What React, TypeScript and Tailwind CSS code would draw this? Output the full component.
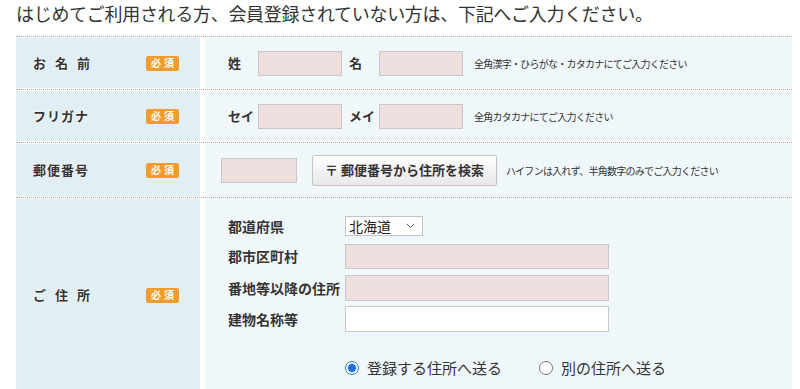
import type { ReactNode } from 'react';

function Badge() {
  return (
    <span className="inline-flex h-[15px] w-[33px] items-center justify-center rounded-[2px] bg-[#f39b2d] pl-[3px] text-[10px] leading-none font-bold tracking-[3px] text-white">
      必須
    </span>
  );
}

function Row({ label, height, children }: { label: ReactNode; height: string; children: ReactNode }) {
  return (
    <div className="border-t border-dotted border-[#a8a8a8] py-px">
      <div className={`flex gap-[5px] ${height}`}>
        <div className="flex w-[184px] shrink-0 items-center justify-between bg-[#e1eff4] pr-[21px] pl-[17px]">
          <span className="text-[13px] font-bold tracking-[1px] text-[#333] [text-shadow:0_0_2px_#fff,0_0_2px_#fff]">
            {label}
          </span>
          <Badge />
        </div>
        <div className="flex flex-1 items-center bg-[#f0f7fa]">{children}</div>
      </div>
    </div>
  );
}

const labelCls = 'text-[13px] font-bold text-[#333] [text-shadow:0_0_2px_#fff,0_0_2px_#fff]';
const pinkInput = 'h-[25px] border border-[#cbc6c6] bg-[#eedfdf]';
const helpCls = 'text-[10px] tracking-[-0.75px] text-[#333]';

export default function App() {
  return (
    <div className="min-h-screen bg-white pr-2 pl-4 font-['Noto_Sans_CJK_JP',sans-serif] text-[#333]">
      <h1 className="text-[18px] leading-[27px] font-normal tracking-[-0.3px] text-[#333]">
        はじめてご利用される方、会員登録されていない方は、下記へご入力ください。
      </h1>

      <div className="mt-[9px] w-[776px]">
        <Row label={<span className="[word-spacing:4px]">お 名 前</span>} height="h-[50px]">
          <div className="flex items-center pl-[23px]">
            <span className={`w-[30px] ${labelCls}`}>姓</span>
            <input className={`w-[84px] ${pinkInput}`} />
            <span className={`ml-[7px] w-[30px] ${labelCls}`}>名</span>
            <input className={`w-[84px] ${pinkInput}`} />
            <span className={`ml-[11px] ${helpCls}`}>全角漢字・ひらがな・カタカナにてご入力ください</span>
          </div>
        </Row>

        <Row label="フリガナ" height="h-[50px]">
          <div className="flex items-center pl-[23px]">
            <span className={`w-[30px] ${labelCls}`}>セイ</span>
            <input className={`w-[84px] ${pinkInput}`} />
            <span className={`ml-[7px] w-[30px] ${labelCls}`}>メイ</span>
            <input className={`w-[84px] ${pinkInput}`} />
            <span className={`ml-[11px] ${helpCls}`}>全角カタカナにてご入力ください</span>
          </div>
        </Row>

        <Row label="郵便番号" height="h-[52px]">
          <div className="flex items-center pl-[16px]">
            <input className={`w-[76px] ${pinkInput}`} />
            <button className="ml-[15px] h-[31px] w-[185px] rounded-[2px] border border-[#c5c5c5] bg-linear-to-b from-white to-[#e8e8e8] text-[13px] font-bold text-[#333]">
              〒 郵便番号から住所を検索
            </button>
            <span className={`ml-[9px] ${helpCls}`}>ハイフンは入れず、半角数字のみでご入力ください</span>
          </div>
        </Row>

        <Row label={<span className="[word-spacing:4px]">ご 住 所</span>} height="h-[192px]">
          <div className="flex h-full flex-col pt-[17px] pl-[23px]">
            <div className="flex h-[20px] items-center">
              <span className={`w-[117px] text-[14px] ${labelCls}`}>都道府県</span>
              <div className="relative h-[20px] w-[78px] border border-[#c4c4c4] bg-white">
                <span className="absolute top-[-1px] left-[3px] text-[14px] leading-[20px] text-[#222]">北海道</span>
                <svg className="absolute top-[6px] right-[7px]" width="9" height="6" viewBox="0 0 9 6">
                  <path d="M1 1 L4.5 4.5 L8 1" fill="none" stroke="#555" strokeWidth="1" />
                </svg>
              </div>
            </div>
            <div className="mt-[8px] flex items-center">
              <span className={`w-[117px] text-[14px] ${labelCls}`}>郡市区町村</span>
              <input className={`w-[264px] ${pinkInput}`} />
            </div>
            <div className="mt-[6px] flex items-center">
              <span className={`w-[117px] text-[14px] ${labelCls}`}>番地等以降の住所</span>
              <input className={`w-[264px] ${pinkInput} h-[26px]`} />
            </div>
            <div className="mt-[5px] flex items-center">
              <span className={`w-[117px] text-[14px] ${labelCls}`}>建物名称等</span>
              <input className="h-[26px] w-[264px] border border-[#c8c8c8] bg-white" />
            </div>
            <div className="mt-[25px] flex items-center pl-[117px] text-[15px] text-[#333]">
              <label className="flex items-center gap-[8px]">
                <input type="radio" name="ship" defaultChecked className="h-[14px] w-[14px] accent-[#1f6fe8]" />
                登録する住所へ送る
              </label>
              <label className="ml-[37px] flex items-center gap-[8px]">
                <input type="radio" name="ship" className="h-[14px] w-[14px]" />
                別の住所へ送る
              </label>
            </div>
          </div>
        </Row>
      </div>
    </div>
  );
}
